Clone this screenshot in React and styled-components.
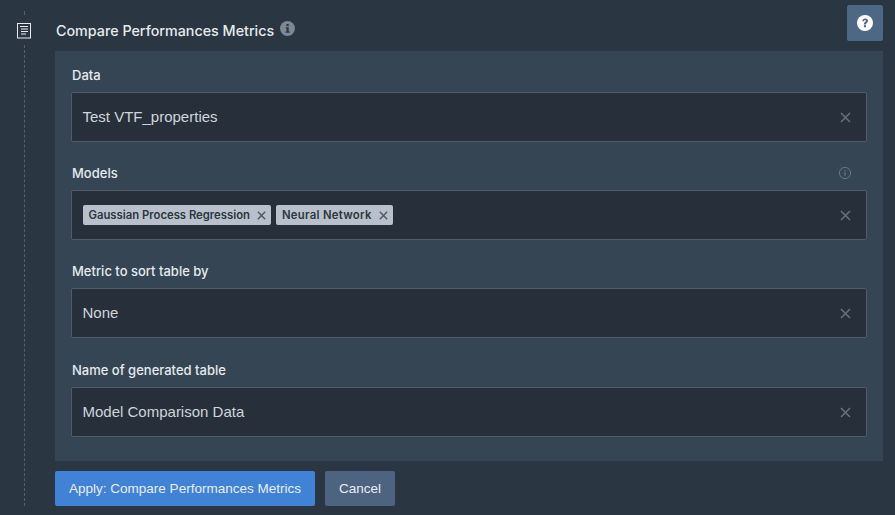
import React from "react";
import styled, { createGlobalStyle } from "styled-components";

const Global = createGlobalStyle`
  html, body { margin: 0; padding: 0; background: #2a3642; }
  body { width: 895px; height: 515px; overflow: hidden; font-family: "Liberation Sans", Arial, sans-serif; }
`;

const Page = styled.div`
  width: 895px; height: 515px; display: flex; background: #2a3642; overflow: hidden;
`;
const Rail = styled.div`
  width: 55px; flex: none; display: flex; flex-direction: column; align-items: center; padding: 11px 7px 9px 0; box-sizing: border-box;
`;
const Dash = styled.div`
  width: 0; border-left: 1px dashed #54606c;
  height: ${p => p.$h}px; flex: ${p => (p.$grow ? 1 : "none")};
`;
const StepIcon = styled.svg`
  width: 15px; height: 16px; margin: 8px 0 6px; display: block; flex: none;
`;
const Main = styled.div`
  width: 828px; flex: none; display: flex; flex-direction: column;
`;
const Header = styled.div`
  height: 51px; display: flex; align-items: flex-start; justify-content: space-between; box-sizing: border-box; padding-top: 5px;
`;
const Title = styled.div`
  display: flex; align-items: center; gap: 6px; margin: 14px 0 0 1px; height: 22px;
  font: 500 14.3px "Inter", sans-serif; color: #e6eaee;
`;
const HelpButton = styled.button`
  width: 36px; height: 36px; border: 0; padding: 0; border-radius: 2px; background: #4d6885;
  display: flex; align-items: center; justify-content: center;
`;
const Panel = styled.div`
  height: 410px; background: #354553; box-sizing: border-box; padding: 16px;
  display: flex; flex-direction: column;
`;
const Field = styled.div`
  height: ${p => p.$h}px; flex: none; display: flex; flex-direction: column;
`;
const LabelRow = styled.div`
  height: 25px; flex: none; display: flex; justify-content: space-between; align-items: flex-start;
`;
const Label = styled.label`
  font: 500 13px/16px "Inter", sans-serif; color: #e6eaee; margin-left: 1px;
`;
const Box = styled.div`
  height: 50px; box-sizing: border-box; flex: none; background: #27303a; border: 1px solid #525c68; border-radius: 2px;
  display: flex; align-items: center; justify-content: space-between; padding: 0 15px 0 10.5px;
  font-size: 15px; color: #cfd5db;
`;
const Value = styled.span`
  margin-bottom: 2px;
`;
const Chips = styled.div`
  display: flex; gap: 5px;
`;
const Chip = styled.span`
  height: 20px; display: inline-flex; align-items: center; gap: 7px; padding: 0 5px 0 6px; background: #b8c1cb; border-radius: 2px;
  font: 600 11.3px "Inter", sans-serif; color: #2b3640; letter-spacing: ${p => p.$spacing || 0}px;
`;
const Actions = styled.div`
  display: flex; gap: 10px; margin-top: 10px;
`;
const Button = styled.button`
  height: 35px; border: 0; padding: 0; border-radius: 2px; width: ${p => p.$w}px;
  background: ${p => (p.$primary ? "#4082d6" : "#4d6480")}; color: #e8edf3;
  font: 13.5px "Liberation Sans", Arial, sans-serif;
`;
const Hint = styled.svg`
  width: 14px; height: 14px; margin: 1px 15px 0 0; display: block;
`;

const X = ({ size = 11, color = "#69727c", w = 1.5 }) => (
  <svg width={size} height={size} viewBox="0 0 11 11" style={{ flex: "none", display: "block" }}>
    <path d="M1 1L10 10M10 1L1 10" stroke={color} strokeWidth={w} />
  </svg>
);
const Info = () => (
  <svg width="15" height="15" viewBox="0 0 15 15" style={{ display: "block", marginTop: -3 }}>
    <circle cx="7.5" cy="7.5" r="7.5" fill="#7c8894" />
    <rect x="6.4" y="3" width="2.3" height="2.2" fill="#2a3642" />
    <path d="M5.8 6.2h2.9v4.2h1v1.3H5.6v-1.3h1V7.5h-.8z" fill="#2a3642" />
  </svg>
);

export default function App() {
  return (
    <Page>
      <Global />
      <Rail>
        <Dash $h={4} />
        <StepIcon viewBox="0 0 15 16">
          <rect x=".5" y=".5" width="13" height="14.5" fill="none" stroke="#e6eaee" />
          <path d="M3 3.5h8M4 6h7M4 8.5h7M4 11h5" stroke="#e6eaee" strokeWidth="1" fill="none" />
        </StepIcon>
        <Dash $grow />
      </Rail>
      <Main>
        <Header>
          <Title>
            Compare Performances Metrics
            <Info />
          </Title>
          <HelpButton aria-label="Help">
            <svg width="16" height="16" viewBox="0 0 16 16">
              <circle cx="8" cy="8" r="8" fill="#fff" />
              <path d="M5.3 6.3C5.3 4.5 6.6 3.4 8.2 3.4c1.7 0 2.8 1 2.8 2.4 0 2-2 2-2 3.7H6.9c0-2.6 1.9-2.6 1.9-3.6 0-.5-.3-.8-.8-.8-.6 0-.9.4-1 1.1z" fill="#4d6885" />
              <rect x="6.9" y="10.2" width="2.1" height="2.1" fill="#4d6885" />
            </svg>
          </HelpButton>
        </Header>
        <Panel>
          <Field $h={98}>
            <LabelRow><Label>Data</Label></LabelRow>
            <Box><Value>Test VTF_properties</Value><X /></Box>
          </Field>
          <Field $h={98}>
            <LabelRow>
              <Label>Models</Label>
              <Hint viewBox="0 0 14 14">
                <circle cx="7" cy="7" r="5.6" fill="none" stroke="#6b7580" strokeWidth="1" />
                <path d="M7 4v1.2M7 6.2v3.6" stroke="#6b7580" strokeWidth="1.3" />
              </Hint>
            </LabelRow>
            <Box>
              <Chips>
                <Chip>Gaussian Process Regression<X size={9} color="#4e5a66" w={1.8} /></Chip>
                <Chip $spacing={0.3}>Neural Network<X size={9} color="#4e5a66" w={1.8} /></Chip>
              </Chips>
              <X />
            </Box>
          </Field>
          <Field $h={99}>
            <LabelRow><Label>Metric to sort table by</Label></LabelRow>
            <Box><Value>None</Value><X /></Box>
          </Field>
          <Field $h={75}>
            <LabelRow><Label>Name of generated table</Label></LabelRow>
            <Box><Value>Model Comparison Data</Value><X /></Box>
          </Field>
        </Panel>
        <Actions>
          <Button $primary $w={260}>Apply: Compare Performances Metrics</Button>
          <Button $w={70}>Cancel</Button>
        </Actions>
      </Main>
    </Page>
  );
}
